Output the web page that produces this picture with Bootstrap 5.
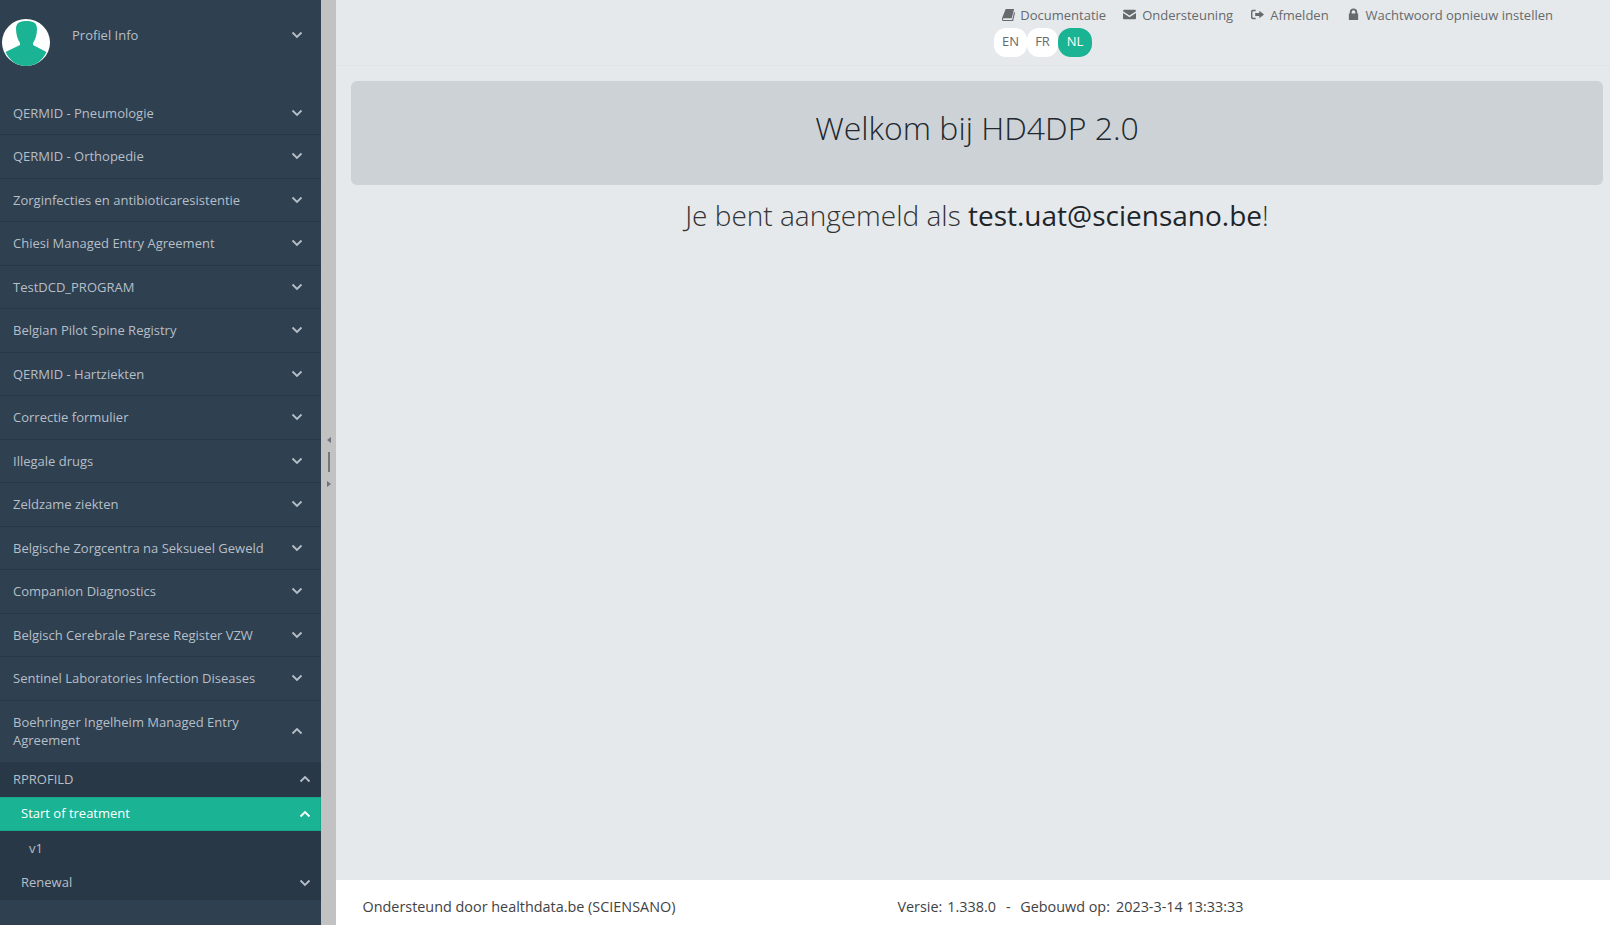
<!DOCTYPE html>
<html lang="nl"><head><meta charset="utf-8"><title>HD4DP</title>
<link href="https://cdn.jsdelivr.net/npm/bootstrap@5.3.0/dist/css/bootstrap.min.css" rel="stylesheet">
<style>
html,body{height:100%;margin:0}
body{font-family:"Open Sans","Liberation Sans",sans-serif;font-size:13px;background:#e5e9ec;color:#676a6c;overflow:hidden}
.shell{height:925px}
.side{width:321px;background:#2f4050;color:#b6bfc8;flex:none;overflow:hidden}
.prof{height:91.5px;padding:0 18px 21.5px 2px}
.avatar{width:48px;height:47px;margin-top:15px;flex:none}
.avatar svg{display:block}
.prof-name{margin-left:22px;padding-top:2px}
.mitem{display:flex;align-items:center;justify-content:space-between;padding:0 18px 0 13px;height:43.5px;border-bottom:1px solid #293846;line-height:18px}
.mitem.tall{height:61.5px;border-bottom:0}
.subwrap{background:#293846}
.sub{display:flex;align-items:center;justify-content:space-between;height:34.5px;padding-right:10px}
.l2{padding-left:13px}.l3{padding-left:21px}.l4{padding-left:29px}
.sub.active{background:#1ab394;color:#fff;border:1px solid #18a689;border-left:0;padding-right:9px}
.chev{width:12px;height:8px;flex:none}
.chev path{fill:none;stroke:currentColor;stroke-width:1.800}
.split{width:15px;background:#c2c2c2;flex:none;gap:9px;padding-bottom:2px}
.arrow-l,.arrow-r{width:0;height:0;border-top:3px solid transparent;border-bottom:3px solid transparent}
.arrow-l{border-right:4px solid #6b7480}
.arrow-r{border-left:4px solid #6b7480}
.grip{width:2px;height:20px;background:#777;margin:0}
.main{min-width:0}
.topb{height:66px;border-bottom:1px solid #dfe3e6;padding:6px 57px 0 0}
.toplink{margin-left:18px;white-space:nowrap}
.toplink svg{width:13px;height:13px;margin-right:6px;vertical-align:-1px}
.toplink.docs{margin-right:-1px}
.toplink.docs svg{margin-right:5px}
.lang{height:29px;width:33px;justify-content:center;display:flex;align-items:center;background:#fff;border-radius:12px;font-size:13px}
.lang.fr{width:31px}
.lang.on{background:#1ab394;color:#fff;width:34px;border-radius:13px}
.langs{margin-right:461px;margin-top:2px}
.hero{margin:15px 7px 0 15px;height:104px;background:#cdd2d6;border-radius:6px;color:#22282e;font-size:32px;font-weight:300;text-align:center;padding-top:25px;line-height:44px}
.sub-hero{margin:10px 7px 0 15px;font-size:28px;font-weight:300;text-align:center;line-height:40px;color:#333}
.sub-hero b{font-weight:400;color:#212529}
.foot{height:46px;background:#fff;border-top:1px solid #e7eaec;font-size:14.4px;color:#3f4245;padding:8px 0 0 26.500px}
.foot .ver{margin-left:222px}
.gap-a{margin-left:5px}
.gap-b{margin-left:10px}
.gap-c{margin-left:9.500px}
.gap-d{margin-left:6px}
</style></head><body>
<div class="d-flex shell">
<nav class="side d-flex flex-column">
 <div class="prof d-flex align-items-center">
  <div class="avatar"><svg viewBox="0 0 48 47" width="48" height="47"><ellipse cx="24" cy="23.500" rx="24" ry="23.500" fill="#fff"/><path fill="#1ab394" d="M24.500 2c-7 0-10.500 2-10.500 8 0 6 2 11 4 14v2L3.500 33C8 42 15 47 24 47s16-5 20.500-14L31 26v-2c2-3 4-8 4-14 0-6-3.500-8-10.500-8z"/></svg></div>
  <span class="prof-name">Profiel Info</span>
  <svg class="chev ms-auto" viewBox="0 0 12 8"><path d="M1.500 1.500 6 6l4.500-4.500"/></svg>
 </div>
 <div class="mitem"><span>QERMID - Pneumologie</span><svg class="chev" viewBox="0 0 12 8"><path d="M1.500 1.500 6 6l4.500-4.500"/></svg></div>
 <div class="mitem"><span>QERMID - Orthopedie</span><svg class="chev" viewBox="0 0 12 8"><path d="M1.500 1.500 6 6l4.500-4.500"/></svg></div>
 <div class="mitem"><span>Zorginfecties en antibioticaresistentie</span><svg class="chev" viewBox="0 0 12 8"><path d="M1.500 1.500 6 6l4.500-4.500"/></svg></div>
 <div class="mitem"><span>Chiesi Managed Entry Agreement</span><svg class="chev" viewBox="0 0 12 8"><path d="M1.500 1.500 6 6l4.500-4.500"/></svg></div>
 <div class="mitem"><span>TestDCD_PROGRAM</span><svg class="chev" viewBox="0 0 12 8"><path d="M1.500 1.500 6 6l4.500-4.500"/></svg></div>
 <div class="mitem"><span>Belgian Pilot Spine Registry</span><svg class="chev" viewBox="0 0 12 8"><path d="M1.500 1.500 6 6l4.500-4.500"/></svg></div>
 <div class="mitem"><span>QERMID - Hartziekten</span><svg class="chev" viewBox="0 0 12 8"><path d="M1.500 1.500 6 6l4.500-4.500"/></svg></div>
 <div class="mitem"><span>Correctie formulier</span><svg class="chev" viewBox="0 0 12 8"><path d="M1.500 1.500 6 6l4.500-4.500"/></svg></div>
 <div class="mitem"><span>Illegale drugs</span><svg class="chev" viewBox="0 0 12 8"><path d="M1.500 1.500 6 6l4.500-4.500"/></svg></div>
 <div class="mitem"><span>Zeldzame ziekten</span><svg class="chev" viewBox="0 0 12 8"><path d="M1.500 1.500 6 6l4.500-4.500"/></svg></div>
 <div class="mitem"><span>Belgische Zorgcentra na Seksueel Geweld</span><svg class="chev" viewBox="0 0 12 8"><path d="M1.500 1.500 6 6l4.500-4.500"/></svg></div>
 <div class="mitem"><span>Companion Diagnostics</span><svg class="chev" viewBox="0 0 12 8"><path d="M1.500 1.500 6 6l4.500-4.500"/></svg></div>
 <div class="mitem"><span>Belgisch Cerebrale Parese Register VZW</span><svg class="chev" viewBox="0 0 12 8"><path d="M1.500 1.500 6 6l4.500-4.500"/></svg></div>
 <div class="mitem"><span>Sentinel Laboratories Infection Diseases</span><svg class="chev" viewBox="0 0 12 8"><path d="M1.500 1.500 6 6l4.500-4.500"/></svg></div>
 <div class="mitem tall"><span>Boehringer Ingelheim Managed Entry<br>Agreement</span><svg class="chev" viewBox="0 0 12 8"><path d="M1.500 6.500 6 2l4.500 4.500"/></svg></div>
 <div class="subwrap">
  <div class="sub l2"><span>RPROFILD</span><svg class="chev" viewBox="0 0 12 8"><path d="M1.500 6.500 6 2l4.500 4.500"/></svg></div>
  <div class="sub l3 active"><span>Start of treatment</span><svg class="chev" viewBox="0 0 12 8"><path d="M1.500 6.500 6 2l4.500 4.500"/></svg></div>
  <div class="sub l4"><span>v1</span></div>
  <div class="sub l3"><span>Renewal</span><svg class="chev" viewBox="0 0 12 8"><path d="M1.500 1.500 6 6l4.500-4.500"/></svg></div>
 </div>
</nav>
<div class="split d-flex flex-column align-items-center justify-content-center">
 <span class="arrow-l"></span><span class="grip"></span><span class="arrow-r"></span>
</div>
<div class="main flex-grow-1 d-flex flex-column">
 <div class="topb">
  <div class="d-flex justify-content-end">
   <span class="toplink docs"><svg viewBox="0 0 14 14"><path fill="currentColor" d="M4 1h9l-2.500 10H2a1 1 0 0 0 0 2h9l2-9 1 1-2 9H2a2 2 0 0 1-2-3z"/></svg>Documentatie</span>
   <span class="toplink"><svg viewBox="0 0 14 14"><path fill="currentColor" d="M0 3.500A1.500 1.500 0 0 1 1.500 2h11A1.500 1.500 0 0 1 14 3.500L7 8 0 3.500zM0 5.500V11a1 1 0 0 0 1 1h12a1 1 0 0 0 1-1V5.500L7 10z"/></svg>Ondersteuning</span>
   <span class="toplink"><svg viewBox="0 0 14 14"><path fill="currentColor" d="M5 2H2a2 2 0 0 0-2 2v6a2 2 0 0 0 2 2h3v-1.500H2.500a1 1 0 0 1-1-1v-5a1 1 0 0 1 1-1H5zM9 3l5 4-5 4V8.500H4.500v-3H9z"/></svg>Afmelden</span>
   <span class="toplink"><svg viewBox="0 0 14 14"><path fill="currentColor" d="M3 6V4.500a4 4 0 0 1 8 0V6h1v7H2V6zm2 0h4V4.500a2 2 0 0 0-4 0z"/></svg>Wachtwoord opnieuw instellen</span>
  </div>
  <div class="d-flex justify-content-end langs">
   <span class="lang">EN</span><span class="lang fr">FR</span><span class="lang on">NL</span>
  </div>
 </div>
 <div class="hero">Welkom bij HD4DP 2.0</div>
 <div class="sub-hero">Je bent aangemeld als <b>test.uat@sciensano.be</b>!</div>
 <div class="foot d-flex align-items-center mt-auto"><span>Ondersteund door healthdata.be (SCIENSANO)</span><span class="ver">Versie:<span class="gap-a">1.338.0</span><span class="gap-b">-</span><span class="gap-c">Gebouwd op:</span><span class="gap-d">2023-3-14 13:33:33</span></span></div>
</div>
</div>
<script src="https://cdn.jsdelivr.net/npm/bootstrap@5.3.0/dist/js/bootstrap.bundle.min.js"></script>
</body></html>
